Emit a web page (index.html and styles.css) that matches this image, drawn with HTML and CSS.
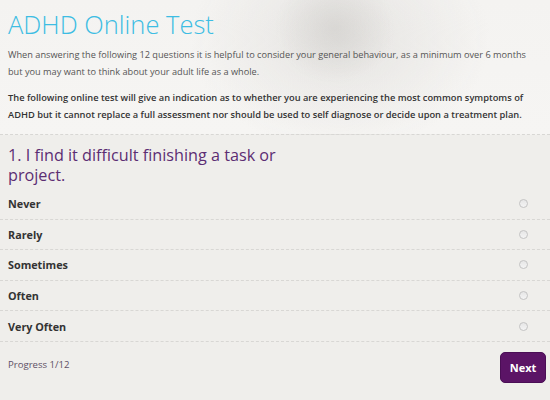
FILE: index.html
```html
<!DOCTYPE html>
<html>
<head>
<meta charset="utf-8">
<link rel="stylesheet" href="styles.css">
</head>
<body>
<div class="page">
  <header class="intro">
    <h1 class="title">ADHD Online Test</h1>
    <p class="lead">When answering the following 12 questions it is helpful to consider your general behaviour, as a minimum over 6 months but you may want to think about your adult life as a whole.</p>
    <p class="lead strong">The following online test will give an indication as to whether you are experiencing the most common symptoms of ADHD but it cannot replace a full assessment nor should be used to self diagnose or decide upon a treatment plan.</p>
  </header>
  <section class="quiz">
    <h2 class="question">1. I find it difficult finishing a task or project.</h2>
    <ul class="options">
      <li class="option"><span>Never</span><span class="radio"></span></li>
      <li class="option"><span>Rarely</span><span class="radio"></span></li>
      <li class="option"><span>Sometimes</span><span class="radio"></span></li>
      <li class="option"><span>Often</span><span class="radio"></span></li>
      <li class="option"><span>Very Often</span><span class="radio"></span></li>
    </ul>
    <div class="footer">
      <span class="progress">Progress 1/12</span>
      <button class="next">Next</button>
    </div>
  </section>
</div>
</body>
</html>
```
FILE: styles.css
```css
* { box-sizing: border-box; }
html, body { margin: 0; padding: 0; }
body {
  width: 550px;
  height: 400px;
  overflow: hidden;
  background: #efeeeb;
  font-family: "Open Sans", "DejaVu Sans", sans-serif;
}
.intro {
  padding: 8px 8px 0 8px;
  height: 135px;
  border-bottom: 1px dashed #d8d7d4;
  background:
    radial-gradient(ellipse 60px 55px at 335px 28px, rgba(205,203,200,0.55), rgba(205,203,200,0) 100%),
    radial-gradient(ellipse 150px 110px at 340px 40px, rgba(218,216,213,0.55), rgba(218,216,213,0) 100%),
    linear-gradient(#f4f3f1, #f6f5f3);
}
.title {
  margin: 0;
  font-weight: 300;
  font-size: 25.5px;
  line-height: 33px;
  color: #3dbde3;
}
.lead {
  margin: 6px 0 0 0;
  font-size: 9.2px;
  line-height: 16.5px;
  color: #555;
}
.lead.strong {
  margin-top: 10px;
  font-size: 9.3px;
  font-weight: 600;
  color: #333;
}
.question {
  margin: 0;
  padding: 10px 8px 0 8px;
  width: 290px;
  font-weight: 400;
  font-size: 16.2px;
  line-height: 20px;
  color: #5c2d73;
}
.options {
  list-style: none;
  margin: 4px 0 0 0;
  padding: 0;
}
.option {
  display: flex;
  align-items: center;
  justify-content: space-between;
  height: 30.6px;
  padding: 0 22px 0 8px;
  border-bottom: 1px dashed #d8d7d4;
  font-size: 10.8px;
  font-weight: 700;
  color: #333;
}
.radio {
  width: 9px;
  height: 9px;
  border-radius: 50%;
  border: 1px solid #c3c3c3;
  background: linear-gradient(#e6e6e6, #f4f4f4);
}
.footer {
  display: flex;
  justify-content: space-between;
  align-items: flex-start;
  padding: 10px 4px 0 8px;
}
.progress {
  margin-top: 6px;
  font-size: 9.6px;
  color: #5e5066;
}
.next {
  width: 46px;
  height: 31px;
  border: 1px solid #4a0e55;
  border-radius: 5px;
  background: #5b1466;
  color: #fff;
  font-family: "Open Sans", sans-serif;
  font-weight: 700;
  font-size: 11px;
  padding: 0;
}
```
